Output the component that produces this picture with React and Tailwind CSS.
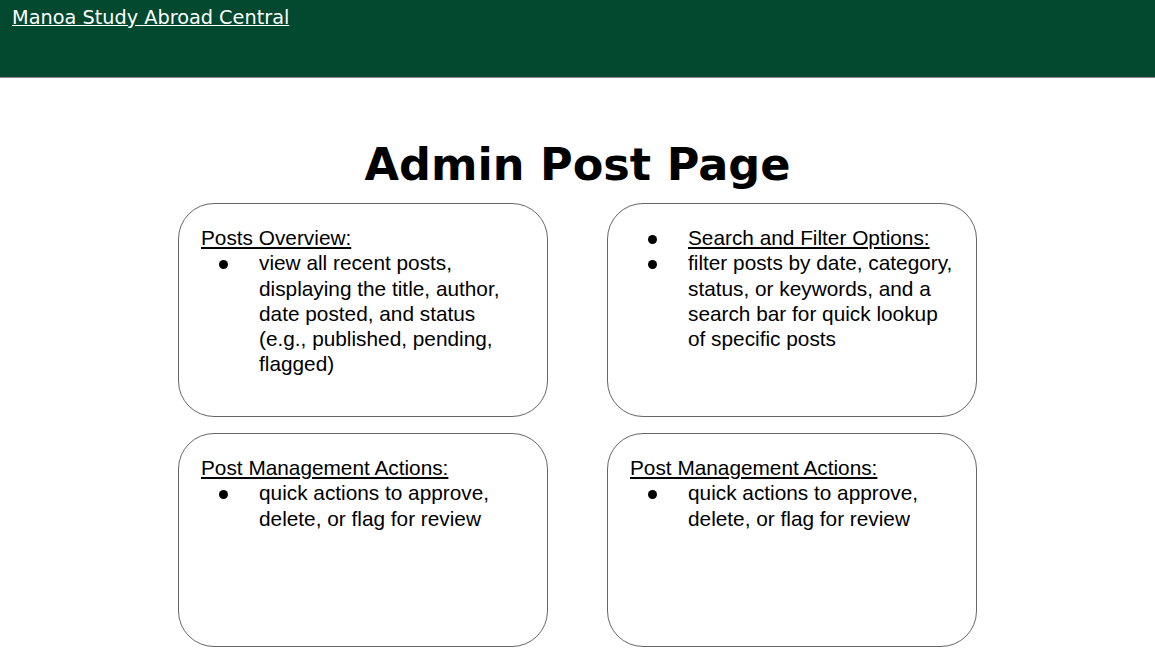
import React from "react";

function Bullet({ children, underline }) {
  return (
    <div className="flex">
      <span className="flex h-[25.3px] w-[80px] shrink-0 items-center pl-[40px]">
        <span className="mt-[3px] block h-[9px] w-[9px] rounded-full bg-black"></span>
      </span>
      <span className={underline ? "underline" : ""}>{children}</span>
    </div>
  );
}

function Card({ children, pr }) {
  return (
    <div className={"h-[214px] rounded-[36px] border border-[#666666] bg-white pt-[21px] text-black " + pr}>
      {children}
    </div>
  );
}

export default function App() {
  return (
    <div className="min-h-[670px] bg-white">
      <header className="h-[78px] border-b border-[#8a8a8a] bg-[#02492f] px-[12px] pt-[6px]">
        <a href="#" className="text-[19.3px] leading-[24px] text-white underline [font-family:'DejaVu_Sans',sans-serif]">
          Manoa Study Abroad Central
        </a>
      </header>
      <h1 className="mt-[59px] text-center text-[44.6px] font-bold leading-[56px] text-black [font-family:'DejaVu_Sans',sans-serif]">
        Admin Post Page
      </h1>
      <div className="mx-auto mt-[10px] grid w-[799px] grid-cols-2 gap-x-[59px] gap-y-[16px] text-[20.8px] leading-[25.3px] [font-family:'Liberation_Sans',Arial,sans-serif]">
        <Card pr="pr-[44px]">
          <div className="pl-[22px] underline">Posts Overview:</div>
          <Bullet>
            view all recent posts, displaying the title, author, date posted, and status (e.g., published, pending, flagged)
          </Bullet>
        </Card>
        <Card pr="pr-[16px]">
          <Bullet underline>Search and Filter Options:</Bullet>
          <Bullet>
            filter posts by date, category, status, or keywords, and a search bar for quick lookup of specific posts
          </Bullet>
        </Card>
        <Card pr="pr-[16px]">
          <div className="pl-[22px] underline">Post Management Actions:</div>
          <Bullet>quick actions to approve, delete, or flag for review</Bullet>
        </Card>
        <Card pr="pr-[16px]">
          <div className="pl-[22px] underline">Post Management Actions:</div>
          <Bullet>quick actions to approve, delete, or flag for review</Bullet>
        </Card>
      </div>
    </div>
  );
}
